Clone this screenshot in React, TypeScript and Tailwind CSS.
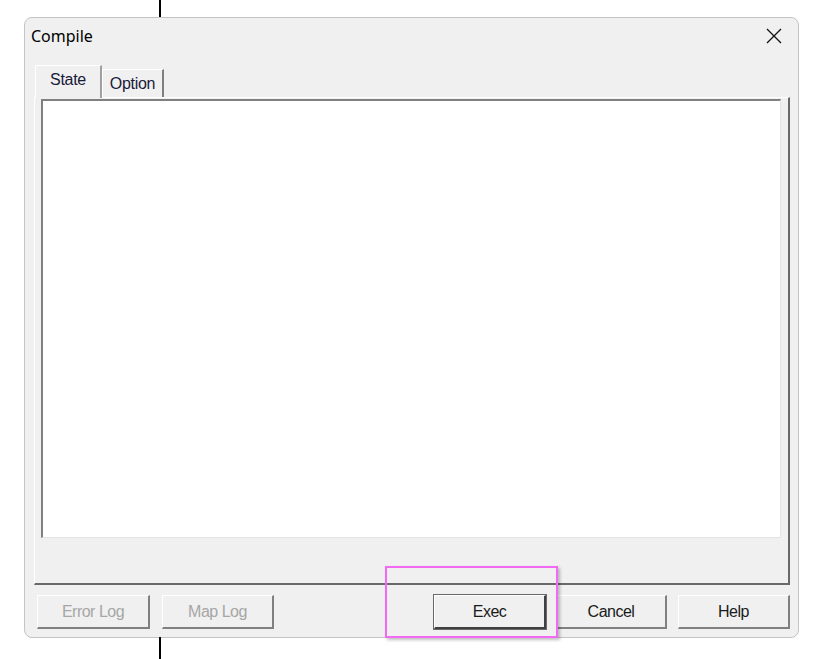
import React from 'react';

const font = { fontFamily: '"Liberation Sans", Arial, sans-serif' };

type BtnProps = { label: string; disabled?: boolean; isDefault?: boolean; className?: string };

const Button: React.FC<BtnProps> = ({ label, disabled, isDefault, className }) => (
  <div
    className={`h-[34px] flex items-center justify-center text-[16px] tracking-[-0.5px] bg-[#f0f0f0] border-t border-l border-t-white border-l-white border-r-2 border-b-2 ${
      isDefault ? 'border-r-[#404040] border-b-[#404040] outline outline-1 outline-[#696969]' : 'border-r-[#808080] border-b-[#808080]'
    } ${disabled ? 'text-[#a6a6a6]' : 'text-[#1a1a1a]'} ${className ?? 'w-[112px]'}`}
  >
    {label}
  </div>
);

export default function App() {
  return (
    <div className="relative w-[827px] h-[659px] bg-white overflow-hidden" style={font}>
      {/* vertical guide lines */}
      <div className="absolute left-[159px] top-0 w-[2px] h-[17px] bg-black" />
      <div className="absolute left-[159px] top-[637px] w-[2px] h-[22px] bg-black" />

      <div className="pt-[17px] pl-[24px]">
        <div className="w-[775px] h-[621px] rounded-[8px] border border-[#c4c4c4] bg-[#f0f0f0] flex flex-col">
          {/* title bar */}
          <div className="h-[38px] flex items-center justify-between pl-[6px] pr-[16px] pb-[2px]">
            <span className="text-[16px] text-black" style={{ fontFamily: '"Noto Sans", "Open Sans", sans-serif' }}>
              Compile
            </span>
            <svg width="16" height="16" viewBox="0 0 16 16">
              <path d="M1 1 L15 15 M15 1 L1 15" stroke="#111" strokeWidth="1.3" fill="none" />
            </svg>
          </div>

          {/* tabs */}
          <div className="pl-[10px] pt-[8px] flex items-end h-[41px]">
            <div className="h-[33px] w-[67px] -mb-[1px] relative z-10 bg-[#f0f0f0] border-t border-l border-t-white border-l-white border-r-2 border-r-[#a0a0a0] flex justify-center pt-[2px] text-[16px] text-[#1a1a3a] tracking-[-0.3px]">
              State
            </div>
            <div className="h-[28px] w-[62px] bg-[#f0f0f0] border-t border-l border-t-white border-l-white border-r-2 border-r-[#808080] flex justify-center pt-[2px] text-[16px] text-[#1a1a3a] tracking-[-0.3px]">
              Option
            </div>
          </div>

          {/* panel */}
          <div className="ml-[9px] w-[756px] h-[488px] border-t border-l border-t-white border-l-white border-r-2 border-b-2 border-r-[#696969] border-b-[#696969] pl-[6px] pt-[1px] flex flex-col">
            <div className="w-[740px] h-[439px] bg-white border-t-2 border-l-2 border-t-[#808080] border-l-[#808080] border-r border-b border-r-[#e3e3e3] border-b-[#e3e3e3]" />
          </div>

          {/* buttons */}
          <div className="flex items-center pt-[10px] pl-[12px]">
            <Button label="Error Log" disabled className="w-[113px]" />
            <Button label="Map Log" disabled className="w-[112px] ml-[12px]" />
            <Button label="Exec" isDefault className="w-[112px] ml-[160px]" />
            <Button label="Cancel" className="w-[111px] ml-[10px]" />
            <Button label="Help" className="w-[112px] ml-[11px]" />
          </div>
        </div>
      </div>

      {/* focus highlight */}
      <div className="absolute left-[385px] top-[566px] w-[173px] h-[72px] border-2 border-[#f26af2] shadow-[2px_2px_3px_rgba(0,0,0,0.25)]" />
    </div>
  );
}
